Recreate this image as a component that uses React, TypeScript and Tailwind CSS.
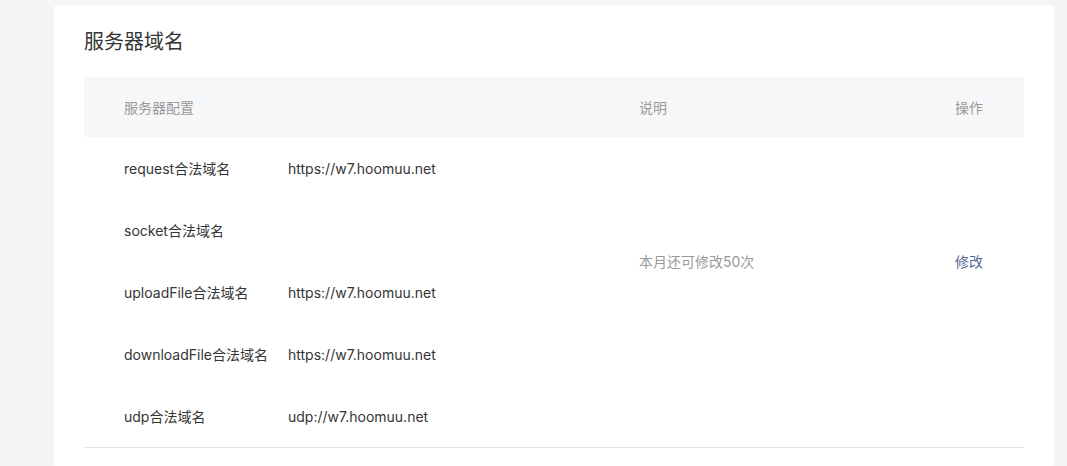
import React from "react";

const rows = [
  { label: "request合法域名", value: "https://w7.hoomuu.net" },
  { label: "socket合法域名", value: "" },
  { label: "uploadFile合法域名", value: "https://w7.hoomuu.net" },
  { label: "downloadFile合法域名", value: "https://w7.hoomuu.net" },
  { label: "udp合法域名", value: "udp://w7.hoomuu.net" },
];

const App = () => {
  return (
    <div
      className="min-h-[466px] bg-[#f4f5f7] pl-[54px] pr-[12px] pt-[5px]"
      style={{ fontFamily: 'Inter, "Noto Sans CJK SC", sans-serif' }}
    >
      <div className="w-[1000px] rounded bg-white px-[30px] pt-[21px]">
        <h2 className="text-[20px] leading-[32px] text-[#353535] mb-[19px]">服务器域名</h2>
        <div className="flex h-[60px] items-center bg-[#f6f7f9] text-[14px] text-[#9a9a9a]">
          <div className="w-[555px] pl-[40px]">服务器配置</div>
          <div className="flex-1">说明</div>
          <div className="pr-[41px]">操作</div>
        </div>
        <div className="flex border-b border-[#e5e5e5] text-[14px] text-[#353535]">
          <div className="w-[555px]">
            {rows.map((r) => (
              <div key={r.label} className="flex h-[62px] items-center pl-[40px]">
                <div className="w-[164px]">{r.label}</div>
                <div>{r.value}</div>
              </div>
            ))}
          </div>
          <div className="flex flex-1 pt-[114px]">
            <div className="flex-1 text-[#9a9a9a]">本月还可修改50次</div>
            <a className="pr-[41px] text-[#55679a] cursor-pointer">修改</a>
          </div>
        </div>
        <div className="h-[20px]" />
      </div>
    </div>
  );
};

export default App;
